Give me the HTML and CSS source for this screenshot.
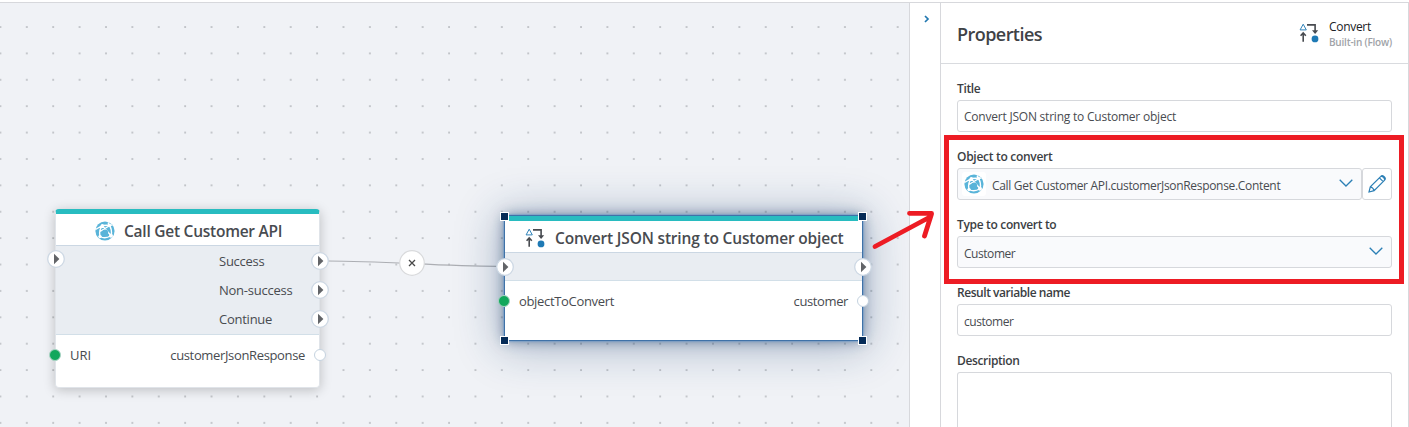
FILE: index.html
```html
<!DOCTYPE html>
<html lang="en">
<head>
<meta charset="utf-8">
<title>Flow designer</title>
<link rel="stylesheet" href="styles.css">
</head>
<body>
<svg class="defs" width="0" height="0">
  <symbol id="convert" viewBox="0 0 20 20">
    <path d="M4.200 1.200 7.300 6.900H1.100Z" fill="none" stroke="#2f83ba" stroke-width="1"/>
    <path d="M8 1.900h8.100v6" fill="none" stroke="#484b50" stroke-width="1.600"/>
    <path d="M13 7.300h6.200L16.100 11Z" fill="#484b50"/>
    <path d="M4.200 18.800v-8M1.600 12.800 4.200 10l2.600 2.800" fill="none" stroke="#484b50" stroke-width="1.600"/>
    <circle cx="16" cy="15.900" r="3.400" fill="#1f7ab5"/>
  </symbol>
  <symbol id="api" viewBox="0 0 20 20">
    <circle cx="10" cy="10" r="9.600" fill="#59b4d9"/>
    <g fill="none" stroke="#fff" stroke-width="1.400">
      <path d="M7.500 5C4.500 8 4 11.500 5 15.500M7.500 5 16 14.500M5 15.500C8.500 17.500 12.500 17 16 14.500M.5 8.500 7.500 4.500 17.500 4M16 14.500C17.300 10.500 16.300 6.500 13 1.500M5 10.500 14 5"/>
    </g>
    <g fill="#fff"><circle cx="7.300" cy="4.700" r="1.700"/><circle cx="5" cy="15.600" r="1.700"/><circle cx="16" cy="14.800" r="2"/><circle cx="14.500" cy="4.200" r="1.500"/></g>
    <circle cx="10.200" cy="11.300" r="2.900" fill="#59b4d9"/>
  </symbol>
  <symbol id="play" viewBox="0 0 18 18">
    <circle cx="9" cy="9" r="8.300" fill="#fff" stroke="#cdd8e4" stroke-width="1.300"/>
    <path d="M7 3.700 12.400 9 7 14.300Z" fill="#626468"/>
  </symbol>
  <symbol id="chevron" viewBox="0 0 14 8">
    <path d="M.7.7 7 7 13.300.7" fill="none" stroke="#2b7fb5" stroke-width="1.300"/>
  </symbol>
</svg>
<div class="app">
  <main class="canvas">
    <svg class="edge" width="909" height="424" viewBox="0 3 909 424">
      <path d="M328 261C385 261 440 266.300 497 266.300" fill="none" stroke="#acaeb3" stroke-width="1.200"/>
    </svg>
    <section class="node call">
      <header class="node-head"><svg class="node-icon"><use href="#api"/></svg><span class="call-title">Call Get Customer API</span></header>
      <div class="flow-ports">
        <span class="port-label">Success</span><span class="port-label">Non-success</span><span class="port-label">Continue</span>
      </div>
      <div class="data-ports"><span class="uri">URI</span><span class="response">customerJsonResponse</span></div>
      <svg class="play in"><use href="#play"/></svg>
      <svg class="play out1"><use href="#play"/></svg>
      <svg class="play out2"><use href="#play"/></svg>
      <svg class="play out3"><use href="#play"/></svg>
      <i class="dot filled"></i><i class="dot empty"></i>
    </section>
    <section class="node conv">
      <header class="node-head"><svg class="node-icon"><use href="#convert"/></svg><span class="conv-title">Convert JSON string to Customer object</span></header>
      <div class="flow-ports"></div>
      <div class="data-ports"><span class="object">objectToConvert</span><span class="cust">customer</span></div>
      <svg class="play in"><use href="#play"/></svg>
      <svg class="play out1"><use href="#play"/></svg>
      <i class="dot filled"></i><i class="dot empty"></i>
      <i class="handle tl"></i><i class="handle tr"></i><i class="handle bl"></i><i class="handle br"></i>
    </section>
    <svg class="remove" viewBox="0 0 26 26"><circle cx="13" cy="13" r="12.300" fill="#fff" stroke="#d9dadc" stroke-width="1.200"/><path d="m10 10 6 6m0-6-6 6" stroke="#484848" stroke-width="1.300"/></svg>
  </main>
  <div class="rail"><svg width="6" height="8" viewBox="0 0 6 8"><path d="m1 1 3 3-3 3" fill="none" stroke="#2278b0" stroke-width="1.700"/></svg></div>
  <aside class="panel">
    <header class="panel-head">
      <h1>Properties</h1>
      <div class="kind"><svg class="kind-icon"><use href="#convert"/></svg>
        <div class="kind-text"><span class="kind-name">Convert</span><span class="kind-sub">Built-in (Flow)</span></div>
      </div>
    </header>
    <div class="fields">
      <div class="field"><label><span class="label-title">Title</span></label><div class="box title-box"><span class="value-title">Convert JSON string to Customer object</span></div></div>
      <div class="field"><label><span class="label-object">Object to convert</span></label>
        <div class="combo">
          <div class="box select"><span class="chip"><svg class="api-small"><use href="#api"/></svg></span><span class="value-object">Call Get Customer API.customerJsonResponse.Content</span><svg class="chevron"><use href="#chevron"/></svg></div>
          <div class="box edit"><svg width="18" height="18" viewBox="0 0 18 18"><path d="M1 17 2.300 11.900 12.600 1.600Q14-.1 15.900 1.400L16.600 2.100Q18.100 4 16.400 5.400L6.100 15.700ZM2.300 11.900Q5.200 12.500 6.100 15.700M11.400 2.800l3.800 3.800M13.200 1.200q3 .5 3.600 3.600" fill="none" stroke="#2b7fb5" stroke-width="1.200"/></svg></div>
        </div>
      </div>
      <div class="field"><label><span class="label-type">Type to convert to</span></label><div class="box select"><span class="value-short">Customer</span><svg class="chevron"><use href="#chevron"/></svg></div></div>
      <div class="field"><label><span class="label-result">Result variable name</span></label><div class="box"><span class="value-short">customer</span></div></div>
      <div class="field"><label><span class="label-desc">Description</span></label><div class="box area"></div></div>
    </div>
  </aside>
</div>
<div class="callout"></div>
<svg class="arrow" width="70" height="45" viewBox="870 205 70 45"><path d="M875 246.500 930 217M909.500 213.300H931.500M931.500 214 924.500 236" fill="none" stroke="#ed1c24" stroke-width="4.800" stroke-linecap="round"/></svg>
</body>
</html>
```

FILE: styles.css
```css
* { box-sizing: border-box; }
body {
  margin: 0;
  height: 427px;
  overflow: hidden;
  background: #fff;
  color: #484b50;
  font-family: "Open Sans", "Noto Sans", sans-serif;
  font-size: 12px;
}
svg { display: block; flex: none; }
.defs { position: absolute; }
span { white-space: nowrap; }
.app {
  display: flex;
  height: 425px;
  margin-top: 2px;
  border-top: 1px solid #d7d8dc;
}
.canvas {
  position: relative;
  width: 909px;
  flex: none;
  overflow: hidden;
  background-color: #f0f2f6;
  background-image: radial-gradient(circle at 1px 1px, #999ca2 0, #a9acb1 .5px, transparent 1px);
  background-size: 26.4px 26.4px;
  background-position: -.6px -3.400px;
}
.edge { position: absolute; left: 0; top: 0; }
.node {
  position: absolute;
  display: flex;
  flex-direction: column;
  background: #fff;
  font-size: 13px;
}
.call {
  left: 55px; top: 206px; width: 265px; height: 179px;
  border: 1px solid #e0e4e9;
  border-top: 5px solid #28bcc0;
  border-radius: 4px;
  box-shadow: 0 2px 12px rgba(0,0,0,.22);
}
.conv {
  left: 504px; top: 212px; width: 359px; height: 126px;
  border: 1px solid #3f72a8;
  box-shadow: 0 0 2px #4b8ccc, 0 0 12px rgba(20,50,95,.5), 0 3px 42px 4px rgba(20,60,110,.32);
}
.conv .node-head { border-top: 5px solid #28bcc0; }
.node-head {
  display: flex;
  align-items: center;
  height: 32px;
  flex: none;
  border-bottom: 1px solid #cbd7e3;
  font-size: 15.5px;
  font-weight: 600;
}
.call-title { letter-spacing: -.25px; }
.conv-title { letter-spacing: -.17px; }
.node-icon { width: 20px; height: 20px; }
.call .node-head { padding: 2px 0 0 39px; gap: 9px; }
.conv .node-head { height: 37px; padding: 2px 0 0 20px; gap: 10px; }
.flow-ports {
  display: flex;
  flex-direction: column;
  background: #e9edf2;
  border-bottom: 1px solid #d2dfe8;
}
.call .flow-ports { height: 89px; padding: 1px 0 0 163px; }
.conv .flow-ports { height: 28px; }
.port-label { height: 29px; line-height: 29px; letter-spacing: -.25px; }
.data-ports { display: flex; justify-content: space-between; height: 40px; align-items: center; }
.call .data-ports, .conv .data-ports { padding: 0 14px; }
.response { letter-spacing: -.35px; }
.object { letter-spacing: -.33px; }
.cust { letter-spacing: -.38px; }
.play { position: absolute; width: 18px; height: 18px; }
.call .in { left: -9px; top: 36px; }
.call .out1 { left: 255px; top: 38px; }
.call .out2 { left: 255px; top: 67px; }
.call .out3 { left: 255px; top: 96px; }
.conv .in { left: -9px; top: 42px; }
.conv .out1 { left: 349px; top: 42px; }
.dot { position: absolute; width: 12px; height: 12px; border-radius: 50%; border: 1px solid #c5d3e0; background: #fff; }
.dot.filled { background: #12a75c; border-color: #a9d3c4; }
.call .dot { top: 135px; }
.call .filled { left: -7px; }
.call .empty { left: 258px; }
.conv .dot { top: 79px; }
.conv .filled { left: -7px; }
.conv .empty { left: 352px; }
.handle { position: absolute; width: 9px; height: 9px; background: #052b57; border: 1px solid #fff; }
.tl, .bl { left: -5px; }
.tr, .br { right: -5px; }
.tl, .tr { top: -4px; }
.bl, .br { bottom: -5px; }
.remove { position: absolute; left: 399px; top: 247px; width: 26px; height: 26px; }
.rail {
  width: 32px;
  flex: none;
  border: solid #d7d8dc;
  border-width: 0 1px;
  padding: 12px 0 0 14px;
}
.panel { width: 468px; border-right: 1px solid #d7d8dc; }
.panel-head {
  display: flex;
  justify-content: space-between;
  height: 61px;
  padding: 0 16px;
  border-bottom: 1px solid #d9dbdf;
}
h1 { margin: 17px 0 0; font-size: 18px; line-height: 28px; font-weight: 600; letter-spacing: -.55px; color: #3f4246; }
.kind { display: flex; padding-top: 15px; gap: 10px; }
.kind-icon { width: 20px; height: 20px; margin-top: 5px; }
.kind-text { display: flex; flex-direction: column; width: 63px; }
.kind-name { line-height: 18px; letter-spacing: -.3px; color: #202226; }
.kind-sub { font-size: 10px; font-weight: 600; line-height: 12px; letter-spacing: -.22px; color: #a0a3a8; }
.fields { display: flex; flex-direction: column; gap: 16px; padding: 16px 16px 0; }
.field { display: flex; flex-direction: column; gap: 2px; }
label { height: 18px; line-height: 18px; font-weight: 600; color: #3b3e43; }
.label-title { letter-spacing: -.35px; }
.label-object { letter-spacing: -.29px; }
.label-type { letter-spacing: -.33px; }
.label-result { letter-spacing: -.45px; }
.label-desc { letter-spacing: -.36px; }
.value-title { letter-spacing: -.22px; }
.value-object { letter-spacing: -.32px; }
.value-short { letter-spacing: -.45px; }
.box {
  display: flex;
  align-items: center;
  height: 32px;
  padding: 2px 6px 0;
  border: 1px solid #d6d8dc;
  border-radius: 3px;
}
.title-box { padding-top: 0; }
.select { background: #f9fafc; }
.combo { display: flex; }
.combo .select { width: 405px; padding-left: 4px; }
.edit { width: 30px; padding: 0; justify-content: center; }
.chip { display: flex; align-items: center; justify-content: center; width: 24px; height: 24px; margin: -2px 6px 0 0; background: #fff; border-radius: 3px; }
.api-small { width: 20px; height: 20px; }
.chevron { width: 14px; height: 8px; margin: -4px 2px 0 auto; }
.area { height: 55px; border-bottom: 0; border-radius: 3px 3px 0 0; }
.callout {
  position: absolute;
  left: 944px; top: 135px; width: 460px; height: 149px;
  border: 5px solid #ed1c24;
}
.arrow { position: absolute; left: 870px; top: 205px; }
```
